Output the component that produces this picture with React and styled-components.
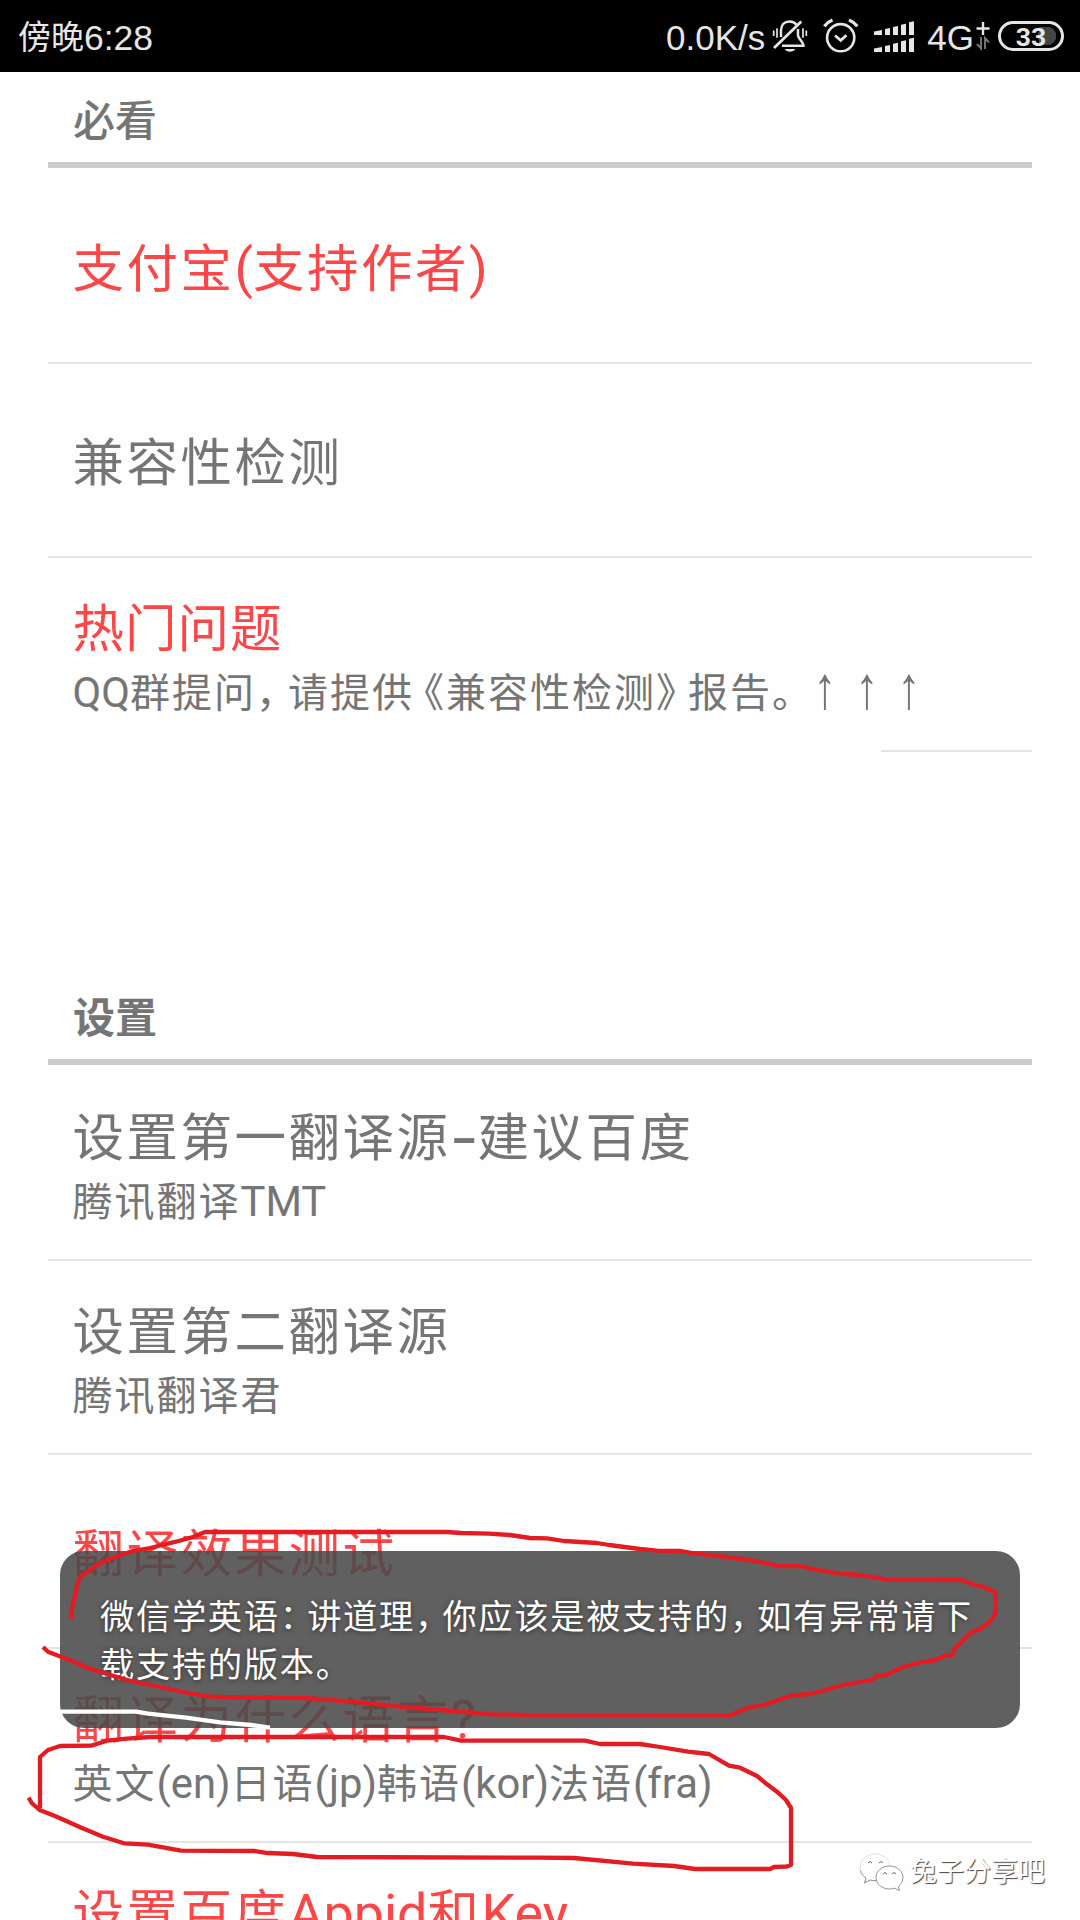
import styled, { createGlobalStyle, css } from 'styled-components';

const sections = [
  {
    title: '必看',
    weight: 500,
    height: 96,
    rows: [
      { title: '支付宝(支持作者)', accent: true },
      { title: '兼容性检测' },
      {
        title: '热门问题',
        tight: true,
        accent: true,
        summary: 'QQ群提问，请提供《兼容性检测》报告。↑↑↑',
        divider: 151
      }
    ]
  },
  {
    title: '设置',
    weight: 700,
    height: 313,
    rows: [
      { title: '设置第一翻译源-建议百度', summary: '腾讯翻译TMT' },
      { title: '设置第二翻译源', summary: '腾讯翻译君' },
      { title: '翻译效果测试', accent: true },
      {
        title: '翻译为什么语言?',
        accent: true,
        summary: '英文(en)日语(jp)韩语(kor)法语(fra)'
      },
      { title: '设置百度Appid和Key', accent: true, summary: ' ' }
    ]
  }
];

const TOAST_TEXT = '微信学英语：讲道理，你应该是被支持的，如有异常请下载支持的版本。';

// Full-width punctuation is set narrower than the ideographs around it,
// and Latin runs are a touch larger than them.
function Text({ children }) {
  return children.split(/([，：。《》↑-]|[A-Za-z()?]+)/).map((part, index) => {
    if (part === '《') return <OpenMark key={index}>{part}</OpenMark>;
    if (part === '↑') return <Arrow key={index}>{part}</Arrow>;
    if (part === '-') return <Dash key={index}>{part}</Dash>;
    if (/^[，：。》]$/.test(part)) return <CloseMark key={index}>{part}</CloseMark>;
    if (/^[A-Za-z()?]+$/.test(part)) return <Latin key={index}>{part}</Latin>;
    return part;
  });
}

function MuteIcon() {
  return (
    <svg width="38" height="36" viewBox="0 0 38 36" fill="none" stroke="#e6e6e6" strokeWidth="2.5">
      <path d="M11 19v-6.500C11 7 14.500 3.500 19.500 3.500c3 0 5.500 1.200 7 3.200M28 11v6.500c0 2.500 5.500 7 5.500 10.200H12" />
      <path d="M31.300 3.400 4 29.900" strokeWidth="2.800" />
      <path d="M3.700 12.500V18M7 10.300v9.400M33 10.300v9.400M36.300 12.500V18" strokeWidth="1.700" />
      <path d="M14.800 31h10.400c-1.500 3.700-8.900 3.700-10.400 0z" fill="#e6e6e6" stroke="none" />
    </svg>
  );
}

function AlarmIcon() {
  return (
    <svg width="36" height="36" viewBox="0 0 36 36" fill="none" stroke="#e6e6e6" strokeWidth="2.6">
      <circle cx="17.700" cy="19.700" r="13.600" />
      <path d="m12 17.500 5.700 4.800 5.800-5" strokeWidth="2.800" />
      <path d="M1.300 8.300Q4.500 4 9.500 2M34.300 8.300Q31 4 26 2" strokeWidth="3.200" />
    </svg>
  );
}

function SignalIcon() {
  return (
    <svg width="41" height="33" viewBox="0 0 41 33" fill="#e6e6e6">
      <path d="M0 11.500 8 10v5H0zM11 9l5-1v7h-5zM19 7l5-1v9h-5zM27 4.800l5-1V15h-5zM35 2.300l5-1V15h-5z" />
      <path d="M0 28.500 8 27v5H0zM11 26l5-1v7h-5zM19 23.700l5-1V32h-5zM27 21.300l5-1V32h-5zM35 18.800l5-1V32h-5z" />
    </svg>
  );
}

function DataIcon() {
  return (
    <svg width="14" height="30" viewBox="0 0 14 30" fill="none">
      <path d="M7 1v13M.5 7.500h13" stroke="#e6e6e6" strokeWidth="2.400" />
      <path d="M5 16v11.500L1 23M9 28V17l4 4.500" stroke="#777" strokeWidth="1.900" />
    </svg>
  );
}

function WechatIcon() {
  return (
    <svg width="46" height="40" viewBox="0 0 46 40" fill="#fff" strokeWidth="0.900">
      <path stroke="#ddd" d="M16 2C8 2 1 8 1 15.500c0 4.500 2.300 8 6 10.500l-1.500 5 5.500-3c2 .6 4 .8 6 .6C27 28 32 22 31 14 30 7 24 2 16 2z" />
      <path stroke="#888" fill="none" d="M1.500 18.500c.6 3 2.500 5.500 5.500 7.500l-1.500 5 5.500-3c2 .6 4 .8 6 .6" />
      <path stroke="#888" d="M30.500 14C23 14 17 19 17 25.500S23 37 30.500 37c1.800 0 3.500-.3 5-.8l5 2.300-1.300-4.200c3-2.200 4.800-5.300 4.800-8.800C44 19 38 14 30.500 14z" />
      <path stroke="#555" fill="none" d="M9 11q2-3 4 0M20 11q2-3 4 0M24 22q2-3 4 0M33 22q2-3 4 0" />
    </svg>
  );
}

function SettingRow({ title, summary, accent, tight, divider }) {
  return (
    <Row>
      <RowBody>
        <RowTitle $accent={accent} $tight={tight}><Text>{title}</Text></RowTitle>
        {summary && <RowSummary><Text>{summary}</Text></RowSummary>}
      </RowBody>
      <Divider $width={divider} />
    </Row>
  );
}

function Scribbles() {
  return (
    <Ink viewBox="0 0 1080 1920" fill="none" stroke="#e31b23" strokeWidth="4.300" strokeLinejoin="round">
      <polyline points="70.600,1619 72.300,1606 75,1597 76.500,1587 80,1577 88,1571.500 100,1563 115,1557 132.600,1551 150,1548 162,1545 176,1541.700 193,1537 205,1532 447,1532 461,1533 489,1533.700 510,1535 530,1538 547,1538.300 564,1541 597,1543 609,1545 640,1549 657,1550.700 681,1551 695,1553.700 716,1555.700 750,1560 779,1566 800,1566 815,1569.700 840,1573.700 860,1575 888,1579.700 962,1580 972,1584 984,1587 995.600,1592.700 995.600,1613 991,1620.700 982,1627.700 970,1633 962,1641.700 955,1648 952,1655 944,1656 936,1660 922,1662 903,1667 886,1675 877,1676 872,1680 843,1685 812,1693.700 790,1696 764,1705 748,1707.700 730,1715.300 540,1715.300 492,1714.300 441,1710 399,1706.700 372,1703.700 324,1699.300 303,1698 248,1697.700 210,1696.700 188,1693 165,1688 131,1681 107,1674 88,1668 74,1661.700 48,1651.700 43,1647" />
      <polyline points="28.600,1797.700 31.700,1803 39.600,1810 55,1816 82,1828 103,1836.700 124,1843.300 148,1844.700 181,1850.700 255,1851 268,1853 293,1854 317,1857 540,1857.700 574,1858 633,1863.700 674,1866 695,1869 770,1869 774,1867 786,1866.700 791,1865 791,1808 786,1800 777,1791.700 765,1782.700 757,1776 740,1767.700 729,1765.700 709,1754 688,1751.700 660,1747 640,1744 600,1744 585,1740.700 461,1740.700 444,1737 151,1737 127,1738.700 107,1740.700 91,1745.700 60,1746 48,1750 40,1757 40,1808" />
      <polyline stroke="#fff" points="61,1711.700 136,1711.700 148,1713.700 186,1717.700 220,1722.300 251,1725 270,1727.700" />
    </Ink>
  );
}

export default function App() {
  return (
    <Screen>
      <GlobalStyle />
      <StatusBar>
        <Clock><ClockPeriod>傍晚</ClockPeriod>6:28</Clock>
        <StatusIcons>
          <StatusText>0.0K/s</StatusText>
          <IconSlot $left={5}><MuteIcon /></IconSlot>
          <IconSlot $left={15}><AlarmIcon /></IconSlot>
          <IconSlot $left={15}><SignalIcon /></IconSlot>
          <IconSlot $left={12}><StatusText>4G</StatusText></IconSlot>
          <IconSlot $left={2}><DataIcon /></IconSlot>
          <Battery>33</Battery>
        </StatusIcons>
      </StatusBar>

      {sections.map((section) => (
        <section key={section.title}>
          <SectionHeader $height={section.height} $weight={section.weight}>
            {section.title}
          </SectionHeader>
          <List>
            {section.rows.map((row) => (
              <SettingRow key={row.title} {...row} />
            ))}
          </List>
        </section>
      ))}

      <Toast><Text>{TOAST_TEXT}</Text></Toast>
      <Scribbles />
      <Watermark>
        <WechatIcon />
        兔子分享吧
      </Watermark>
    </Screen>
  );
}

const GlobalStyle = createGlobalStyle`
  body {
    margin: 0;
    background: #fff;
  }
`;

const Screen = styled.main`
  position: relative;
  width: 1080px;
  height: 1920px;
  overflow: hidden;
  background: #fefefe;
  color: #757575;
  font-family: Roboto, 'Noto Sans CJK SC', sans-serif;
`;

const StatusBar = styled.header`
  display: flex;
  align-items: center;
  justify-content: space-between;
  box-sizing: border-box;
  height: 72px;
  padding: 0 16px 0 18px;
  background: #000;
  color: #e6e6e6;
  font-family: 'Liberation Sans', 'Noto Sans CJK SC', sans-serif;
`;

const Clock = styled.div`
  display: flex;
  align-items: center;
  padding-top: 4px;
  font-size: 35.5px;
  line-height: 72px;
`;

const ClockPeriod = styled.span`
  font-size: 33px;
`;

const StatusIcons = styled.div`
  display: flex;
  align-items: center;
  height: 72px;
`;

const StatusText = styled.span`
  padding-top: 4px;
  font-size: 35px;
  line-height: 72px;
`;

const IconSlot = styled.span`
  display: flex;
  margin-left: ${({ $left }) => $left}px;
`;

const Battery = styled.span`
  display: flex;
  align-items: center;
  justify-content: center;
  box-sizing: border-box;
  width: 66px;
  height: 30px;
  margin-left: 8px;
  padding-top: 1px;
  border: 3px solid #e6e6e6;
  border-radius: 15px;
  background: radial-gradient(circle at 46px 12px, #444 9px, transparent 9.5px),
    linear-gradient(#444, #444) 38px 3px / 8px 18px no-repeat;
  font: 700 26.5px Roboto, sans-serif;
`;

const SectionHeader = styled.h2`
  display: flex;
  align-items: flex-end;
  box-sizing: border-box;
  height: ${({ $height }) => $height}px;
  margin: 0 48px;
  padding: 0 25px 10px;
  border-bottom: 6px solid #cbcbcb;
  font-size: 42px;
  font-weight: ${({ $weight }) => $weight};
  line-height: 60px;
`;

const List = styled.div`
  padding: 2px 48px 0;
`;

const Row = styled.div`
  display: flex;
  flex-direction: column;
  height: 194px;
`;

const RowBody = styled.div`
  display: flex;
  flex: 1;
  flex-direction: column;
  justify-content: center;
  padding: 7px 24px 0 24.5px;
  white-space: pre;
`;

const RowTitle = styled.div`
  color: ${({ $accent }) => ($accent ? '#fb4747' : '#757575')};
  font-size: 51.5px;
  letter-spacing: ${({ $tight }) => ($tight ? '1px' : '2.5px')};
  line-height: 72px;
`;

const RowSummary = styled.div`
  font-size: 40px;
  letter-spacing: 2px;
  line-height: 56px;
`;

const Divider = styled.div`
  width: ${({ $width }) => ($width ? `${$width}px` : '100%')};
  height: 2px;
  margin-left: auto;
  background: #e4e4e4;
`;

const Latin = styled.span`
  font-size: 1.045em;
  letter-spacing: 0;
  line-height: 1;
`;

const CloseMark = styled.span`
  margin-right: -0.25em;
`;

const OpenMark = styled.span`
  margin-left: -0.25em;
`;

const glyphCell = css`
  display: inline-block;
  letter-spacing: 0;
  line-height: 1;
  text-align: center;
`;

const Arrow = styled.span`
  ${glyphCell}
  width: 42px;
  font-family: 'Liberation Serif', serif;
  font-size: 46px;
  transform: translateY(-3px) scaleY(1.3);
`;

const Dash = styled.span`
  ${glyphCell}
  width: 27px;
  font-weight: 500;
  transform: scaleX(1.5);
`;

const Toast = styled.div`
  position: absolute;
  top: 1551px;
  left: 60px;
  box-sizing: border-box;
  width: 960px;
  height: 177px;
  padding: 42px 36px 0 40px;
  border-radius: 24px;
  background: rgba(74, 74, 74, 0.88);
  color: #fff;
  font-size: 34.3px;
  letter-spacing: 1.65px;
  line-height: 48px;
  text-shadow: 0 1px 5px rgba(0, 0, 0, 0.5);
`;

const Ink = styled.svg`
  position: absolute;
  inset: 0;
  width: 1080px;
  height: 1920px;
`;

const Watermark = styled.div`
  position: absolute;
  top: 1850px;
  left: 859px;
  display: flex;
  align-items: center;
  gap: 5px;
  color: #fff;
  font-size: 27px;
  line-height: 44px;
  text-shadow: 1px 1px 1px #444;
`;
